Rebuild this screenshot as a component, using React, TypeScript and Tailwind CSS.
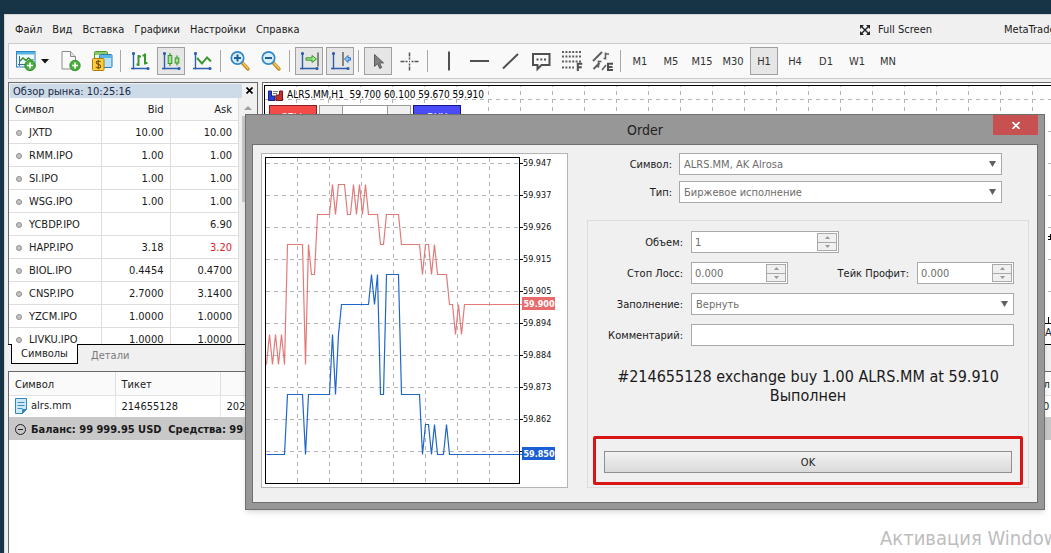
import React from 'react';
import clsx from 'clsx';

type Quote = { symbol: string; bid: string; ask: string; down?: boolean };

const quotes: Quote[] = [
  { symbol: 'JXTD', bid: '10.00', ask: '10.00' },
  { symbol: 'RMM.IPO', bid: '1.00', ask: '1.00' },
  { symbol: 'SI.IPO', bid: '1.00', ask: '1.00' },
  { symbol: 'WSG.IPO', bid: '1.00', ask: '1.00' },
  { symbol: 'YCBDP.IPO', bid: '', ask: '6.90' },
  { symbol: 'HAPP.IPO', bid: '3.18', ask: '3.20', down: true },
  { symbol: 'BIOL.IPO', bid: '0.4454', ask: '0.4700' },
  { symbol: 'CNSP.IPO', bid: '2.7000', ask: '3.1400' },
  { symbol: 'YZCM.IPO', bid: '1.0000', ask: '1.0000' },
  { symbol: 'LIVKU.IPO', bid: '1.0000', ask: '1.0000' },
];

const menu = ['Файл', 'Вид', 'Вставка', 'Графики', 'Настройки', 'Справка'];
const periods = ['M1', 'M5', 'M15', 'M30', 'H1', 'H4', 'D1', 'W1', 'MN'];

// tick chart, in pixels from the chart panel's corner
const scale = [
  { y: 10, label: '59.947' },
  { y: 42, label: '59.937' },
  { y: 74, label: '59.926' },
  { y: 106, label: '59.915' },
  { y: 138, label: '59.905' },
  { y: 170, label: '59.894' },
  { y: 202, label: '59.884' },
  { y: 234, label: '59.873' },
  { y: 266, label: '59.862' },
];

const askLine =
  '5,211 8,181 11,211 14,181 17,211 20,181 23,211 26,91 41,91 44,211 47,91 50,121 53,121 56,61 68,61 71,31 74,61 77,31 83,31 86,61 89,61 92,31 95,61 98,31 101,61 104,31 107,61 116,61 119,91 122,91 125,61 137,61 140,91 158,91 161,121 164,91 167,91 170,121 173,91 176,121 185,121 188,151 191,151 194,181 197,151 200,181 203,151 261,151';
const bidLine =
  '5,301 23,301 26,241 41,241 44,301 47,241 68,241 71,181 74,241 77,181 80,151 107,151 110,121 113,151 116,121 119,241 122,241 125,121 137,121 140,241 158,241 161,301 164,271 167,271 170,301 173,271 176,301 182,301 185,271 188,301 261,301';

function Axes() {
  return (
    <g stroke="#2d5fae" strokeWidth="1.4" fill="#2d5fae">
      <path d="M3.5 1.5v17M1 17.5h17.5" />
      <circle cx="3.5" cy="2.5" r="0.9" />
      <circle cx="18" cy="17.5" r="0.9" />
    </g>
  );
}

function Plus({ cx, cy }: { cx: number; cy: number }) {
  return (
    <g>
      <circle cx={cx} cy={cy} r="5.2" fill="#4cae3c" stroke="#2f8a26" strokeWidth="0.9" />
      <path d={`M${cx - 3} ${cy}h6M${cx} ${cy - 3}v6`} stroke="#fff" strokeWidth="1.7" />
    </g>
  );
}

const icons: Record<string, React.ReactNode> = {
  newChart: (
    <>
      <rect x="0.5" y="0.5" width="18.5" height="15.5" fill="#eef8ff" stroke="#2f86c0" />
      <rect x="1" y="1" width="17.5" height="2.5" fill="#55b3e8" />
      <path d="M3.5 5v10M2 13.5h7" stroke="#3b6e9c" />
      <path d="M4 10l3-3 3 2.5 2.5-2.5 3 2.5 2-1" stroke="#2f8a26" strokeWidth="1.3" fill="none" />
      <Plus cx={14} cy={14.5} />
    </>
  ),
  newDoc: (
    <>
      <path d="M1 0.5h8.5l5 5v12.5H1z" fill="#fafafa" stroke="#8b8b8b" />
      <path d="M9.5 0.5v5h5" fill="#e4e4e4" stroke="#8b8b8b" />
      <Plus cx={14} cy={14.5} />
    </>
  ),
  money: (
    <>
      <rect x="2.5" y="0.5" width="13" height="11" rx="1" fill="#eaf7e0" stroke="#4b9a2e" />
      <rect x="3" y="1" width="12" height="3" fill="#8ccb68" />
      <rect x="7.5" y="3.5" width="12.5" height="13" rx="1" fill="#b5e1f9" stroke="#2c7dba" />
      <rect x="8" y="4" width="11.5" height="3" fill="#5fb4e6" />
      <rect x="0.5" y="7.5" width="11.5" height="12" rx="1" fill="#fbcf3e" stroke="#b07a0d" />
      <path
        d="M8.6 11c-0.6-0.8-1.5-1-2.4-1-1.2 0-2 0.6-2 1.6 0 2.2 4.4 1.3 4.4 3.6 0 1.2-1 1.8-2.3 1.8-1 0-2-0.3-2.6-1.2M6.3 8.8v9.4"
        stroke="#7a4b00"
        strokeWidth="1.1"
        fill="none"
      />
    </>
  ),
  bars: (
    <>
      <Axes />
      <path d="M8.5 4v11M6.5 13.5h2M8.5 5.5H11M15 2.5v11M12.5 4.5H15M15 12h2.5" stroke="#36992b" strokeWidth="2" />
    </>
  ),
  candles: (
    <>
      <Axes />
      <path d="M9 2v13M16 4.5v10" stroke="#36992b" strokeWidth="1.2" />
      <rect x="7.2" y="4.5" width="3.6" height="8" fill="#a9e08f" stroke="#36992b" />
      <rect x="14.2" y="7" width="3.6" height="5" fill="#a9e08f" stroke="#36992b" />
    </>
  ),
  line: (
    <>
      <Axes />
      <path d="M5 7l5 5.5 5-6 4 4" stroke="#36992b" strokeWidth="1.9" fill="none" />
    </>
  ),
  zoomIn: (
    <>
      <path d="M12 11.5l6 6.5" stroke="#c48a1c" strokeWidth="3.4" strokeLinecap="round" />
      <path d="M12.5 11.5l5.5 6" stroke="#f3cf63" strokeWidth="1.2" strokeLinecap="round" />
      <circle cx="7.5" cy="7" r="6.2" fill="#d9effc" stroke="#2f86c8" strokeWidth="1.7" />
      <path d="M4 7h7M7.5 3.5v7" stroke="#1f5f9c" strokeWidth="2" />
    </>
  ),
  zoomOut: (
    <>
      <path d="M12 11.5l6 6.5" stroke="#c48a1c" strokeWidth="3.4" strokeLinecap="round" />
      <path d="M12.5 11.5l5.5 6" stroke="#f3cf63" strokeWidth="1.2" strokeLinecap="round" />
      <circle cx="7.5" cy="7" r="6.2" fill="#d9effc" stroke="#2f86c8" strokeWidth="1.7" />
      <path d="M4 7h7" stroke="#1f5f9c" strokeWidth="2" />
    </>
  ),
  autoScroll: (
    <>
      <Axes />
      <path d="M19 1.5v14" stroke="#444" strokeWidth="1.2" />
      <path d="M7 6.8h6V4.5l4.5 3.5-4.5 3.500V9.200H7z" fill="#a5e58c" stroke="#36992b" />
    </>
  ),
  shift: (
    <>
      <Axes />
      <path d="M13 1v14" stroke="#444" strokeWidth="1.2" />
      <path d="M20.500 6.800h-2.500V4.500L14.500 8l3.500 3.500V9.200h2.500z" fill="#8cc4f2" stroke="#2d6fc0" />
    </>
  ),
  cursor: <path d="M6.5 3.5v12l3-2.8 2.2 4.8 2-1-2.2-4.6h4z" fill="#808080" stroke="#5a5a5a" />,
  cross: (
    <path
      d="M10.5 1.5v4M10.5 6.5v2M10.5 12.5v2M10.5 15.5v4M1.5 10.5h4M6.5 10.5h2M12.5 10.5h2M15.5 10.5h4M10 10.5h1"
      stroke="#555"
      strokeWidth="1.5"
    />
  ),
  vline: <path d="M12 0.5v19" stroke="#505050" strokeWidth="2" />,
  hline: <path d="M2 10h19" stroke="#505050" strokeWidth="2" />,
  trend: <path d="M4 17.5L19 3" stroke="#505050" strokeWidth="2" />,
  text: (
    <>
      <path d="M3 3h16.5v11h-8l-4 4v-4H3z" fill="none" stroke="#505050" strokeWidth="2" />
      <path d="M6.5 8.5h2M10.3 8.5h2M14 8.5h2" stroke="#505050" strokeWidth="2" />
    </>
  ),
  fibo: (
    <>
      <path
        d="M1 1h19M1 5.5h19M1 10.5h19M1 16.5h12"
        stroke="#606060"
        strokeWidth="2"
        strokeDasharray="2 1.4"
      />
      <path d="M16.8 20v-7.2h4.500M16.8 16.200h4" stroke="#505050" strokeWidth="2" fill="none" />
    </>
  ),
  shapes: (
    <>
      <path d="M1 10l9-9M1.5 18l6-6" stroke="#606060" strokeWidth="2" />
      <path
        d="M13.5 1.5v7M11.5 7.5h2M13.5 3H17M6.5 9.5v7M4.5 15.5h2M6.5 10.5h3M10 19l4-5"
        stroke="#606060"
        strokeWidth="1.6"
      />
      <path d="M21 12.8h-5V19H21M16 16h4.500" stroke="#505050" strokeWidth="2" fill="none" />
    </>
  ),
};

function ToolButton({ name, label, active }: { name: string; label: string; active?: boolean }) {
  return (
    <button
      aria-label={label}
      className={clsx(
        'flex h-7 w-7 items-center justify-center border',
        active ? 'border-[#a0a0a0] bg-[#e6e6e6]' : 'border-transparent',
      )}
    >
      <svg width="20" height="20" viewBox="0 0 20 20" className="overflow-visible">
        {icons[name]}
      </svg>
    </button>
  );
}

function Separator() {
  return <span className="ml-1 mr-[5px] h-[22px] w-px bg-[#a8a8a8]" />;
}

function Toolbar() {
  return (
    <div className="flex h-9 shrink-0 items-center overflow-hidden border border-r-0 border-[#cdcdcd] bg-[#f9f9f9] pl-[3px]">
      <ToolButton name="newChart" label="Новый график" />
      <button aria-label="Выбрать символ" className="flex h-7 w-[17px] items-center pl-px">
        <svg width="8" height="5" viewBox="0 0 8 5">
          <path d="M0 0h8L4 4.5z" fill="#111" />
        </svg>
      </button>
      <div className="flex gap-[3px]">
        <ToolButton name="newDoc" label="Новый ордер" />
        <ToolButton name="money" label="Счёт" />
      </div>
      <Separator />
      <div className="flex gap-[3px]">
        <ToolButton name="bars" label="Бары" />
        <ToolButton name="candles" label="Свечи" active />
        <ToolButton name="line" label="Линия" />
      </div>
      <Separator />
      <div className="flex gap-[3px]">
        <ToolButton name="zoomIn" label="Увеличить" />
        <ToolButton name="zoomOut" label="Уменьшить" />
      </div>
      <Separator />
      <div className="flex gap-[3px]">
        <ToolButton name="autoScroll" label="Автопрокрутка" active />
        <ToolButton name="shift" label="Сдвиг графика" active />
      </div>
      <Separator />
      <div className="flex gap-[3px]">
        <ToolButton name="cursor" label="Курсор" active />
        <ToolButton name="cross" label="Перекрестие" />
      </div>
      <Separator />
      <div className="flex gap-[3px]">
        <ToolButton name="vline" label="Вертикальная линия" />
        <ToolButton name="hline" label="Горизонтальная линия" />
        <ToolButton name="trend" label="Трендовая линия" />
        <ToolButton name="text" label="Текст" />
        <ToolButton name="fibo" label="Фибоначчи" />
        <ToolButton name="shapes" label="Фигуры" />
      </div>
      <Separator />
      <div className="flex gap-[3px]">
        {periods.map((p) => (
          <button
            key={p}
            className={clsx(
              'flex h-7 w-7 items-center justify-center border pt-px text-[#333]',
              p === 'H1' ? 'border-[#a0a0a0] bg-[#e6e6e6]' : 'border-transparent',
            )}
          >
            {p}
          </button>
        ))}
      </div>
    </div>
  );
}

function MarketWatch() {
  return (
    <section className="flex w-[250px] shrink-0 flex-col">
      <div className="flex h-[262px] flex-col border border-b-0 border-[#6a6a6a] bg-[#f0f0f0]">
        <div className="flex h-[15px] shrink-0 items-center">
          <h2 className="ml-px mt-px h-[14px] w-[232px] bg-[#cddae8] pl-[3px] leading-4 text-[#1b2a44]">
            Обзор рынка: 10:25:16
          </h2>
          <button aria-label="Закрыть" className="flex flex-1 justify-center">
            <svg width="7" height="7" viewBox="0 0 7 7">
              <path d="M0.5 0.5l6 6M6.5 0.5l-6 6" stroke="#000" strokeWidth="1.7" />
            </svg>
          </button>
        </div>
        <div className="flex min-h-0 flex-1 overflow-hidden">
          <table className="w-[230px] shrink-0 table-fixed self-start border-collapse bg-white">
            <thead>
              <tr className="h-[22px] border-b border-[#dedede] bg-[#fafafa]">
                <th className="w-[92px] border-r border-[#dedede] pl-[6px] pt-[3px] text-left font-normal">Символ</th>
                <th className="w-[69px] border-r border-[#dedede] pr-[6px] pt-[3px] text-right font-normal">Bid</th>
                <th className="border-r border-[#dedede] pr-[6px] pt-[3px] text-right font-normal">Ask</th>
              </tr>
            </thead>
            <tbody>
              {quotes.map((q) => (
                <tr key={q.symbol} className="h-[23px] border-b border-[#dedede]">
                  <td className="border-r border-[#dedede] pl-[7px] pt-[2px]">
                    <span className="mr-[7px] inline-block h-[6px] w-[6px] rounded-full border border-[#8f8f8f] bg-[#c4c4c4]" />
                    {q.symbol}
                  </td>
                  <td className="border-r border-[#dedede] pr-[6px] pt-[2px] text-right">{q.bid}</td>
                  <td
                    className={clsx(
                      'border-r border-[#dedede] pr-[6px] pt-[2px] text-right',
                      q.down && 'text-[#d8232a]',
                    )}
                  >
                    {q.ask}
                  </td>
                </tr>
              ))}
            </tbody>
          </table>
          <div className="flex flex-1 flex-col items-center pt-2">
            <svg width="8" height="4" viewBox="0 0 8 4">
              <path d="M0 4h8L4 0z" fill="#a0a0a0" />
            </svg>
            <span className="mt-[6px] h-[86px] w-3 bg-[#c8c8c8]" />
          </div>
        </div>
      </div>
      <div className="flex h-5 border-t border-black text-[#7a7a7a]">
        <button className="-mt-px ml-[3px] h-5 w-[67px] border border-t-0 border-black bg-white text-[#222]">
          Символы
        </button>
        <button className="ml-[13px] h-5 pt-px">Детали</button>
      </div>
    </section>
  );
}

function ChartArea() {
  return (
    <section className="ml-1 flex min-w-0 flex-1 flex-col border-l border-t border-[#6a6a6a] bg-white pl-px pt-[2px]">
      <div className="relative h-[239px] overflow-hidden border-b border-l border-t border-black">
        <svg className="absolute inset-0 h-full w-full">
          <defs>
            <pattern id="grid" width="32" height="32" x="31" y="13" patternUnits="userSpaceOnUse">
              <path d="M0.5 0v32M0 0.5h32" stroke="#b4b4b4" strokeDasharray="4 4" />
            </pattern>
          </defs>
          <rect width="100%" height="100%" fill="url(#grid)" />
          <path d="M785.5 148v5M783 153.5h4v-3h-4M783.5 231v8" stroke="#000" fill="none" />
        </svg>
        <div className="relative flex items-center pl-[3px] pt-[2px]">
          <svg width="15" height="11" viewBox="0 0 15 11">
            <path d="M0.5 1h3v5h3.5v4.5H0.5z" fill="#2a3fd0" stroke="#152080" />
            <path d="M14.5 1h-3v4H8v5.5h6.5z" fill="#c22f2f" stroke="#7c1515" />
            <path d="M5 1.5h5M5 3.5h4" stroke="#777" />
          </svg>
          <span className="ml-1 whitespace-pre text-[10px] leading-[14px] text-black">
            ALRS.MM,H1  59.700 60.100 59.670 59.910
          </span>
        </div>
        <div className="relative mt-[3px] flex h-6 gap-[2px] pl-1">
          <button className="w-12 border border-[#8c1d1d] bg-[#f64a48] pt-[2px] text-white">SELL</button>
          <div className="flex w-[92px] border border-[#9a9a9a] bg-white">
            <button aria-label="Меньше" className="w-[23px] border-r border-[#9a9a9a] bg-[#f0f0f0]" />
            <span className="flex-1" />
            <button aria-label="Больше" className="w-[23px] border-l border-[#9a9a9a] bg-[#f0f0f0]" />
          </div>
          <button className="w-12 border border-[#14148c] bg-[#4a4af6] pt-[2px] text-white">BUY</button>
        </div>
      </div>
      <div className="flex h-[21px] justify-end border-b border-black bg-white">
        <span className="w-[6px] overflow-hidden leading-[18px]">A</span>
      </div>
    </section>
  );
}

function Trades() {
  return (
    <section className="mt-[6px] min-h-0 flex-1 overflow-hidden border-l border-t border-[#6a6a6a] bg-white">
      <table className="w-full table-fixed border-collapse">
        <thead>
          <tr className="h-[23px] border-b border-[#e2e2e2] bg-[#fafafa]">
            <th className="w-[106px] border-r border-[#dedede] pl-[6px] pt-[3px] text-left font-normal">Символ</th>
            <th className="w-[105px] border-r border-[#dedede] pl-[6px] pt-[3px] text-left font-normal">Тикет</th>
            <th className="border-r border-[#dedede]" />
            <th className="w-2 pt-[3px] text-left font-normal">л</th>
          </tr>
        </thead>
        <tbody>
          <tr className="h-[22px]">
            <td className="border-r border-[#e8e8e8] pl-[6px]">
              <span className="flex items-center gap-1">
                <svg width="12" height="16" viewBox="0 0 12 16">
                  <path d="M0.5 0.5h11v11l-4 4h-7z" fill="#cdeafa" stroke="#3787b5" />
                  <path d="M11.5 11.5h-4v4z" fill="#3787b5" stroke="#3787b5" />
                  <path d="M2.5 4.5h7M2.5 7.5h7M2.5 10.5h5" stroke="#3f8fbe" />
                </svg>
                alrs.mm
              </span>
            </td>
            <td className="border-r border-[#e8e8e8] pl-[6px] pt-px">214655128</td>
            <td className="pl-[6px] pt-px">2020</td>
            <td className="pt-px">0</td>
          </tr>
          <tr className="h-[23px] bg-[#c8c8c8] font-bold">
            <td colSpan={4} className="pl-[6px] pt-[2px]">
              <span className="flex items-center gap-[5px] whitespace-pre">
                <svg width="11" height="11" viewBox="0 0 11 11">
                  <circle cx="5.5" cy="5.5" r="5" fill="none" stroke="#222" />
                  <path d="M3 5.5h5" stroke="#222" />
                </svg>
                Баланс: 99 999.95 USD  Средства: 99
              </span>
            </td>
          </tr>
        </tbody>
      </table>
    </section>
  );
}

function TickChart() {
  return (
    <div className="h-[335px] w-[307px] shrink-0 border border-[#b4b4b4] bg-white">
      <svg width="305" height="333" viewBox="1 1 305 333">
        {[36, 68, 100, 132, 164, 196, 228].map((x) => (
          <path key={x} d={`M${x}.5 5v326`} stroke="#b4b4b4" strokeDasharray="4 4" />
        ))}
        {[...scale.map((s) => s.y), 298].map((y) => (
          <g key={y}>
            <path d={`M5 ${y}.5h253`} stroke="#b4b4b4" strokeDasharray="4 4" />
            <path d={`M258 ${y}.5h4`} stroke="#000" />
          </g>
        ))}
        <polyline points={askLine} fill="none" stroke="#e27a7a" strokeWidth="1.2" transform="translate(0.5 0.5)" />
        <polyline points={bidLine} fill="none" stroke="#1f66c8" strokeWidth="1.2" transform="translate(0.5 0.5)" />
        <rect x="4.5" y="4.5" width="254" height="326" fill="none" stroke="#000" />
        <g fontSize="9" fill="#111">
          {scale.map((s) => (
            <text key={s.y} x="262" y={s.y + 3}>
              {s.label}
            </text>
          ))}
        </g>
        <rect x="261" y="144" width="33" height="13" fill="#e96a6a" />
        <rect x="261" y="294" width="33" height="13" fill="#1c5fd4" />
        <g fontSize="9" fontWeight="600" fill="#fff" textAnchor="middle">
          <text x="278" y="154">59.900</text>
          <text x="278" y="304">59.850</text>
        </g>
      </svg>
    </div>
  );
}

function SelectBox({ id, value }: { id: string; value: string }) {
  return (
    <div className="relative h-[22px] w-[323px]">
      <select
        id={id}
        className="h-full w-full appearance-none border border-[#a9a9a9] bg-white pl-1 pt-[2px] text-[#6d6d6d]"
        defaultValue={value}
      >
        <option>{value}</option>
      </select>
      <svg className="pointer-events-none absolute right-[6px] top-2" width="7" height="6" viewBox="0 0 7 6">
        <path d="M0 0h7L3.5 6z" fill="#606060" />
      </svg>
    </div>
  );
}

function SpinBox({ id, value, wide }: { id: string; value: string; wide?: boolean }) {
  return (
    <div className={clsx('flex h-[22px] border border-[#a9a9a9] bg-white p-px', wide ? 'w-[148px]' : 'w-[97px]')}>
      <input id={id} defaultValue={value} className="min-w-0 flex-1 pl-[2px] pt-[2px] text-[#6d6d6d] outline-none" />
      <div className="flex w-5 flex-col border border-[#a9a9a9] bg-[#f0f0f0]">
        <button aria-label="Больше" className="flex flex-1 items-center justify-center border-b border-[#a9a9a9]">
          <svg width="5" height="3" viewBox="0 0 5 3">
            <path d="M0 3h5L2.5 0z" fill="#999" />
          </svg>
        </button>
        <button aria-label="Меньше" className="flex flex-1 items-center justify-center">
          <svg width="5" height="3" viewBox="0 0 5 3">
            <path d="M0 0h5L2.5 3z" fill="#999" />
          </svg>
        </button>
      </div>
    </div>
  );
}

function OrderDialog() {
  return (
    <div
      role="dialog"
      aria-label="Order"
      className="absolute left-[245px] right-[6px] top-[114px] border border-[#707070] bg-[#979797] px-[6px] pb-[6px] shadow-md"
    >
      <div className="flex h-[29px] items-start">
        <h1 className="flex-1 pl-[45px] text-center text-sm leading-[30px] text-[#222]">Order</h1>
        <button aria-label="Закрыть" className="flex h-5 w-[45px] items-center justify-center bg-[#c75050]">
          <svg width="8" height="7" viewBox="0 0 8 7">
            <path d="M0.5 0l7 7M7.5 0l-7 7" stroke="#fff" strokeWidth="1.6" />
          </svg>
        </button>
      </div>
      <div className="flex border border-[#707070] bg-[#f0f0f0] px-2 pb-[14px] pt-2">
        <TickChart />
        <div className="ml-[19px] flex flex-1 flex-col">
          <div className="grid grid-cols-[85px_323px] items-center gap-x-[7px] gap-y-[6px]">
            <label htmlFor="symbol" className="pt-[2px] text-right">Символ:</label>
            <SelectBox id="symbol" value="ALRS.MM, AK Alrosa" />
            <label htmlFor="type" className="pt-[2px] text-right">Тип:</label>
            <SelectBox id="type" value="Биржевое исполнение" />
          </div>
          <div className="mt-[17px] flex flex-1 flex-col border border-[#dcdcdc] pt-[10px]">
            <div className="grid grid-cols-[95px_323px] items-center gap-x-2 gap-y-[9px]">
              <label htmlFor="volume" className="pt-[2px] text-right">Объем:</label>
              <SpinBox id="volume" value="1" wide />
              <label htmlFor="sl" className="pt-[2px] text-right">Стоп Лосс:</label>
              <div className="flex items-center justify-between">
                <SpinBox id="sl" value="0.000" />
                <div className="flex items-center gap-2">
                  <label htmlFor="tp" className="pt-[2px]">Тейк Профит:</label>
                  <SpinBox id="tp" value="0.000" />
                </div>
              </div>
              <label htmlFor="filling" className="pt-[2px] text-right">Заполнение:</label>
              <SelectBox id="filling" value="Вернуть" />
              <label htmlFor="comment" className="pt-[2px] text-right">Комментарий:</label>
              <input id="comment" className="h-[22px] border border-[#a9a9a9] bg-white px-1 outline-none" />
            </div>
            <p className="mt-[21px] text-center text-base leading-[19px] text-[#1a1a1a]">
              #214655128 exchange buy 1.00 ALRS.MM at 59.910
              <br />
              Выполнен
            </p>
            <div className="mx-[5px] mb-[2px] mt-auto rounded-xs border-3 border-[#d81414] px-2 pb-[9px] pt-3">
              <button className="h-[22px] w-full border border-[#8e8f94] bg-linear-to-b from-[#f2f2f2] to-[#dadada] pt-px text-[#222]">
                OK
              </button>
            </div>
          </div>
        </div>
      </div>
    </div>
  );
}

export default function App() {
  return (
    <div className="relative flex h-screen flex-col overflow-hidden bg-[#163445] pl-1 pt-[14px] font-['DejaVu_Sans_Condensed','DejaVu_Sans',sans-serif] text-[11px] leading-[14px] text-[#1a1a1a]">
      <div className="flex min-h-0 flex-1 flex-col border-l border-t border-[#d6d6d6] bg-[#f0f0f0] pl-[3px]">
        <nav className="flex h-7 shrink-0 items-center whitespace-nowrap pl-[7px] pt-[2px]">
          <div className="flex gap-[10px]">
            {menu.map((m) => (
              <button key={m}>{m}</button>
            ))}
          </div>
          <button className="ml-auto flex items-center gap-2">
            <svg width="10" height="10" viewBox="0 0 10 10">
              <path d="M0 0h4L0 4zM10 0v4L6 0zM0 10V6l4 4zM10 10H6l4-4z" fill="#222" />
              <path d="M1 1l8 8M9 1L1 9" stroke="#222" strokeWidth="1.4" />
            </svg>
            Full Screen
          </button>
          <span className="ml-[72px] w-[47px] overflow-hidden">MetaTrader</span>
        </nav>
        <Toolbar />
        <div className="mt-[3px] flex shrink-0">
          <MarketWatch />
          <div className="flex min-w-0 flex-1 pb-5">
            <ChartArea />
          </div>
        </div>
        <Trades />
      </div>
      <p className="absolute left-[880px] top-[526px] whitespace-nowrap text-xl leading-6 text-[#bdbdbd]">
        Активация Windows
      </p>
      <OrderDialog />
    </div>
  );
}
